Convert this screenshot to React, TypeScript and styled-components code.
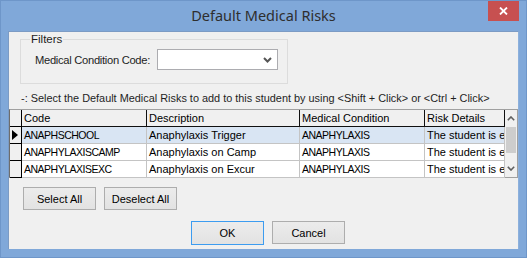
import styled, { createGlobalStyle } from "styled-components";

const GlobalStyle = createGlobalStyle`
  html, body {
    margin: 0;
    padding: 0;
    background: #7fa6d7;
  }
  * {
    box-sizing: border-box;
  }
`;

const Window = styled.div`
  width: 527px;
  height: 258px;
  background: #80a8d9;
  border: 1px solid #6e96c9;
  display: flex;
  flex-direction: column;
  font-family: "Liberation Sans", Arial, sans-serif;
`;

const TitleBar = styled.div`
  height: 30px;
  display: grid;
  grid-template-columns: 38px 1fr 38px;
  align-items: start;
`;

const Title = styled.div`
  grid-column: 2;
  text-align: center;
  font-family: "Noto Sans", "Open Sans", sans-serif;
  font-size: 14.5px;
  line-height: 29px;
  color: #2e2e2e;
`;

const CloseButton = styled.div`
  width: 31px;
  height: 20px;
  background: #c75050;
  display: flex;
  align-items: center;
  justify-content: center;
`;

const Client = styled.div`
  flex: 1;
  margin: 0 7px 8px 7px;
  background: #f0f0f0;
  border: 1px solid #7c9bc4;
  border-right-color: #8cb0dc;
  border-bottom: none;
  display: flex;
  flex-direction: column;
`;

const Group = styled.fieldset`
  margin: 0 0 0 11px;
  width: 268px;
  height: 52px;
  border: 1px solid #dcdcdc;
  padding: 0 0 0 14px;
  display: flex;
  align-items: center;
  gap: 7px;
`;

const Legend = styled.legend`
  font-size: 11.5px;
  color: #1e1e1e;
  padding: 0 1px;
  margin-left: -5px;
  line-height: 14px;
`;

const Label = styled.span`
  font-size: 11.2px;
  letter-spacing: -0.3px;
  color: #1e1e1e;
  margin-top: 3px;
  white-space: nowrap;
  flex-shrink: 0;
`;

const Combo = styled.div`
  width: 121px;
  height: 21px;
  flex-shrink: 0;
  background: #fff;
  border: 1px solid #acacb0;
  display: flex;
  align-items: center;
  justify-content: flex-end;
  padding-right: 5px;
  margin-top: 3px;
`;

const Hint = styled.div`
  font-size: 10.9px;
  color: #1e1e1e;
  margin: 8px 0 0 12px;
  white-space: nowrap;
`;

const GridFrame = styled.div`
  margin-top: 5px;
  height: 69px;
  border: 1px solid #a0a0a0;
  border-left-color: #6d6d6d;
  display: flex;
  background: #fff;
`;

const GridBody = styled.div`
  width: 495px;
  display: flex;
  flex-direction: column;
`;

const Row = styled.div`
  display: grid;
  grid-template-columns: 12px 125px 153px 125px 80px;
  height: 17px;
`;

const Corner = styled.div`
  background: #f0f0f0;
  border-right: 1px solid #000;
  border-bottom: 1px solid #000;
`;

const HeaderCell = styled.div`
  background: #f0f0f0;
  border-right: 1px solid #101010;
  border-bottom: 1px solid #101010;
  font-size: 11px;
  line-height: 16px;
  padding-left: 2px;
  color: #000;
  white-space: nowrap;
  overflow: hidden;
`;

const RowHeader = styled.div`
  background: #f0f0f0;
  border-right: 1px solid #000;
  border-bottom: 1px solid #000;
  display: flex;
  align-items: center;
  padding-left: 2px;
`;

const Cell = styled.div<{ $selected?: boolean; $caps?: boolean }>`
  background: ${(p) => (p.$selected ? "#d9e5f3" : "#fff")};
  border-right: 1px solid #c4c4c4;
  border-bottom: 1px solid #c4c4c4;
  font-size: ${(p) => (p.$caps ? 10.5 : 11)}px;
  letter-spacing: ${(p) => (p.$caps ? -0.5 : 0)}px;
  line-height: 16px;
  padding-left: 2px;
  color: #000;
  white-space: nowrap;
  overflow: hidden;
`;

const ScrollBar = styled.div`
  flex: 1;
  background: #f0f0f0;
  display: flex;
  flex-direction: column;
  align-items: stretch;
`;

const ScrollArrow = styled.div`
  height: 17px;
  display: flex;
  align-items: center;
  justify-content: center;
`;

const Thumb = styled.div`
  height: 26px;
  margin: 0 1px;
  background: #cdcdcd;
`;

const Track = styled.div`
  flex: 1;
`;

const ButtonRow = styled.div<{ $indent: number; $top: number }>`
  display: flex;
  gap: 8px;
  padding-left: ${(p) => p.$indent}px;
  margin-top: ${(p) => p.$top}px;
`;

const Button = styled.button<{ $default?: boolean }>`
  width: 73px;
  height: ${(p) => (p.$default ? 24 : 23)}px;
  background: linear-gradient(#ececec, #e2e2e2);
  border: 1px solid ${(p) => (p.$default ? "#3c9cf0" : "#adadad")};
  font-family: "Liberation Sans", Arial, sans-serif;
  font-size: 11px;
  color: #000;
  padding: 0;
`;

const rows = [
  ["ANAPHSCHOOL", "Anaphylaxis Trigger", "ANAPHYLAXIS", "The student is e"],
  ["ANAPHYLAXISCAMP", "Anaphylaxis on Camp", "ANAPHYLAXIS", "The student is e"],
  ["ANAPHYLAXISEXC", "Anaphylaxis on Excur", "ANAPHYLAXIS", "The student is e"],
];

// code and medical condition columns hold upper-case values
const capsColumns = [true, false, true, false];

function Chevron({ up }: { up?: boolean }) {
  return (
    <svg width="8" height="5" viewBox="0 0 8 5">
      <path
        d={up ? "M0.8 4.2 L4 1 L7.2 4.2" : "M0.8 0.8 L4 4 L7.2 0.8"}
        fill="none"
        stroke="#606060"
        strokeWidth="1.6"
      />
    </svg>
  );
}

export default function App() {
  return (
    <>
      <GlobalStyle />
      <Window>
        <TitleBar>
          <Title>Default Medical Risks</Title>
          <CloseButton>
            <svg width="9" height="8" viewBox="0 0 9 8">
              <path d="M1 0.5 L8 7.5 M8 0.5 L1 7.5" stroke="#fff" strokeWidth="1.8" />
            </svg>
          </CloseButton>
        </TitleBar>
        <Client>
          <Group>
            <Legend>Filters</Legend>
            <Label>Medical Condition Code:</Label>
            <Combo>
              <svg width="9" height="6" viewBox="0 0 9 6">
                <path d="M1 1 L4.5 4.5 L8 1" fill="none" stroke="#555" strokeWidth="2" />
              </svg>
            </Combo>
          </Group>
          <Hint>
            -: Select the Default Medical Risks to add to this student by using &lt;Shift + Click&gt; or
            &lt;Ctrl + Click&gt;
          </Hint>
          <GridFrame>
            <GridBody>
              <Row>
                <Corner />
                <HeaderCell>Code</HeaderCell>
                <HeaderCell>Description</HeaderCell>
                <HeaderCell>Medical Condition</HeaderCell>
                <HeaderCell>Risk Details</HeaderCell>
              </Row>
              {rows.map((r, i) => (
                <Row key={r[0]}>
                  <RowHeader>
                    {i === 0 && (
                      <svg width="6" height="10" viewBox="0 0 6 10">
                        <path d="M0 0 L6 5 L0 10 Z" fill="#000" />
                      </svg>
                    )}
                  </RowHeader>
                  {r.map((c, j) => (
                    <Cell key={c + i} $selected={i === 0} $caps={capsColumns[j]}>
                      {c}
                    </Cell>
                  ))}
                </Row>
              ))}
            </GridBody>
            <ScrollBar>
              <ScrollArrow>
                <Chevron up />
              </ScrollArrow>
              <Thumb />
              <Track />
              <ScrollArrow>
                <Chevron />
              </ScrollArrow>
            </ScrollBar>
          </GridFrame>
          <ButtonRow $indent={14} $top={9}>
            <Button>Select All</Button>
            <Button>Deselect All</Button>
          </ButtonRow>
          <ButtonRow $indent={182} $top={11}>
            <Button $default>OK</Button>
            <Button>Cancel</Button>
          </ButtonRow>
        </Client>
      </Window>
    </>
  );
}
